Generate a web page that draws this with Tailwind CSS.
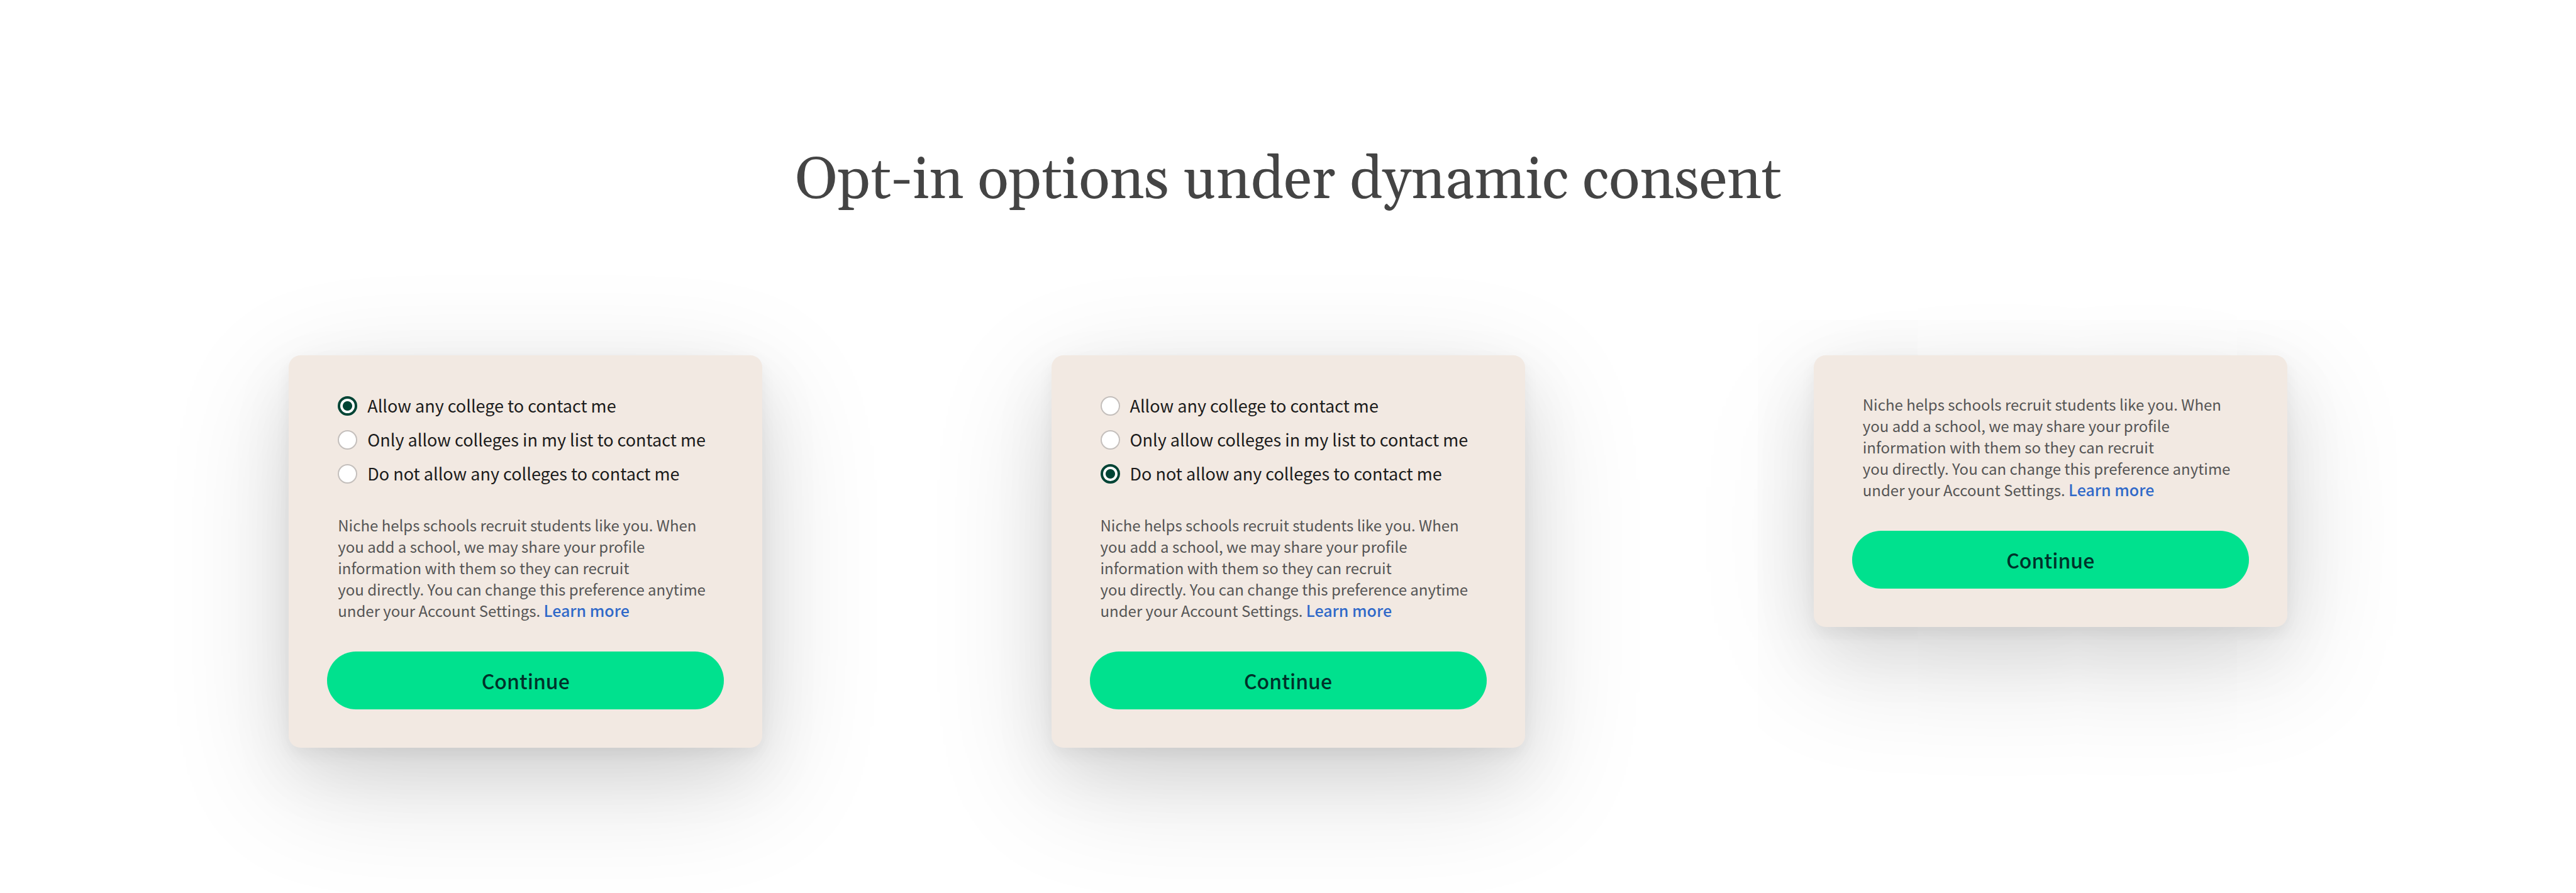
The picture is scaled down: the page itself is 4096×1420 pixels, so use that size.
<!DOCTYPE html>
<html lang="en">
<head>
<meta charset="utf-8">
<title>Opt-in options under dynamic consent</title>
<script src="https://cdn.jsdelivr.net/npm/@tailwindcss/browser@4"></script>
</head>
<body class="min-h-screen overflow-x-hidden bg-white font-['Source_Sans_Pro','Noto_Sans_CJK_SC',sans-serif]">
<header class="pt-[228px] text-center">
<h1 class="font-[Georgia,Gelasio,'Liberation_Serif',serif] text-[92px] leading-[120px] text-[#444444]">Opt-in options under dynamic consent</h1>
</header>
<main class="flex items-start justify-evenly pt-[217px]">

<form class="w-[753px] rounded-[19px] bg-[#f2e9e2] px-[61px] pt-[53px] pb-[61px] shadow-[0_55px_200px_rgba(0,0,0,0.14),0_40px_100px_rgba(0,0,0,0.08),0_10px_24px_rgba(0,0,0,0.05)]">
<fieldset class="px-[17px] whitespace-nowrap">
<label class="flex h-[54px] items-center gap-4 text-[27px] text-[#1b1b1b]"><input type="radio" name="consent-a" checked class="size-[31px] shrink-0 appearance-none rounded-full border-2 border-[#c4bfbc] bg-white checked:border-[4px] checked:border-[#004435] checked:bg-[radial-gradient(circle,#004435_7px,#ffffff_8px)]"><span>Allow any college to contact me</span></label>
<label class="flex h-[54px] items-center gap-4 text-[27px] text-[#1b1b1b]"><input type="radio" name="consent-a" class="size-[31px] shrink-0 appearance-none rounded-full border-2 border-[#c4bfbc] bg-white"><span>Only allow colleges in my list to contact me</span></label>
<label class="flex h-[54px] items-center gap-4 text-[27px] text-[#1b1b1b]"><input type="radio" name="consent-a" class="size-[31px] shrink-0 appearance-none rounded-full border-2 border-[#c4bfbc] bg-white"><span>Do not allow any colleges to contact me</span></label>
</fieldset>
<p class="mt-[38px] px-[17px] text-[24px] leading-[34px] whitespace-nowrap text-[#555555]">Niche helps schools recruit students like you. When<br>you add a school, we may share your profile<br>information with them so they can recruit<br>you directly. You can change this preference anytime<br>under your Account Settings. <a href="#" class="text-[25px] leading-none font-medium text-[#3069c9]">Learn more</a></p>
<button type="button" class="mt-[48px] block h-[92px] w-full rounded-full bg-[#00e18e] text-[32px] font-medium text-[#00312a]">Continue</button>
</form>

<form class="w-[753px] rounded-[19px] bg-[#f2e9e2] px-[61px] pt-[53px] pb-[61px] shadow-[0_55px_200px_rgba(0,0,0,0.14),0_40px_100px_rgba(0,0,0,0.08),0_10px_24px_rgba(0,0,0,0.05)]">
<fieldset class="px-[17px] whitespace-nowrap">
<label class="flex h-[54px] items-center gap-4 text-[27px] text-[#1b1b1b]"><input type="radio" name="consent-b" class="size-[31px] shrink-0 appearance-none rounded-full border-2 border-[#c4bfbc] bg-white"><span>Allow any college to contact me</span></label>
<label class="flex h-[54px] items-center gap-4 text-[27px] text-[#1b1b1b]"><input type="radio" name="consent-b" class="size-[31px] shrink-0 appearance-none rounded-full border-2 border-[#c4bfbc] bg-white"><span>Only allow colleges in my list to contact me</span></label>
<label class="flex h-[54px] items-center gap-4 text-[27px] text-[#1b1b1b]"><input type="radio" name="consent-b" checked class="size-[31px] shrink-0 appearance-none rounded-full border-2 border-[#c4bfbc] bg-white checked:border-[4px] checked:border-[#004435] checked:bg-[radial-gradient(circle,#004435_7px,#ffffff_8px)]"><span>Do not allow any colleges to contact me</span></label>
</fieldset>
<p class="mt-[38px] px-[17px] text-[24px] leading-[34px] whitespace-nowrap text-[#555555]">Niche helps schools recruit students like you. When<br>you add a school, we may share your profile<br>information with them so they can recruit<br>you directly. You can change this preference anytime<br>under your Account Settings. <a href="#" class="text-[25px] leading-none font-medium text-[#3069c9]">Learn more</a></p>
<button type="button" class="mt-[48px] block h-[92px] w-full rounded-full bg-[#00e18e] text-[32px] font-medium text-[#00312a]">Continue</button>
</form>

<form class="w-[753px] rounded-[19px] bg-[#f2e9e2] px-[61px] pt-[61px] pb-[61px] shadow-[0_55px_200px_rgba(0,0,0,0.14),0_40px_100px_rgba(0,0,0,0.08),0_10px_24px_rgba(0,0,0,0.05)]">
<p class="px-[17px] text-[24px] leading-[34px] whitespace-nowrap text-[#555555]">Niche helps schools recruit students like you. When<br>you add a school, we may share your profile<br>information with them so they can recruit<br>you directly. You can change this preference anytime<br>under your Account Settings. <a href="#" class="text-[25px] leading-none font-medium text-[#3069c9]">Learn more</a></p>
<button type="button" class="mt-[48px] block h-[92px] w-full rounded-full bg-[#00e18e] text-[32px] font-medium text-[#00312a]">Continue</button>
</form>
</main>
</body>
</html>
